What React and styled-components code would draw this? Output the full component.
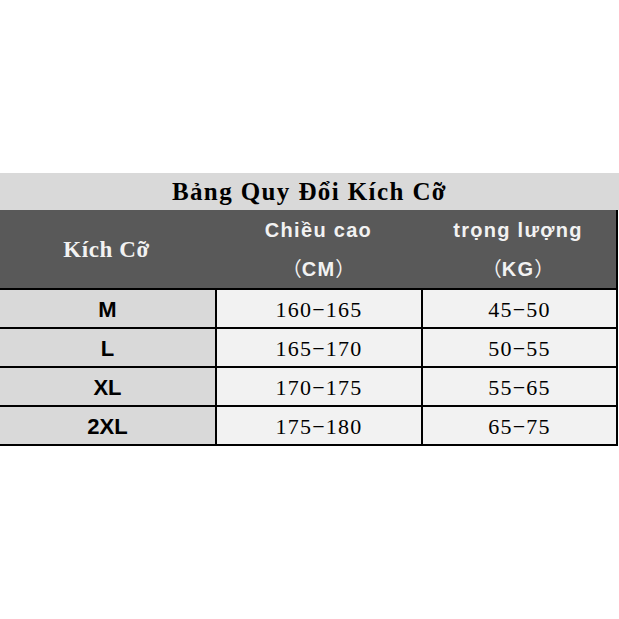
import React from "react";
import styled, { createGlobalStyle } from "styled-components";

const Global = createGlobalStyle`
  html, body { margin: 0; padding: 0; background: #ffffff; }
  body { width: 619px; height: 619px; overflow: hidden; }
`;

const Page = styled.div`
  padding-top: 173px;
  width: 619px;
`;

const Title = styled.div`
  height: 37px;
  background: #d9d9d9;
  display: flex;
  align-items: center;
  justify-content: center;
  font-family: "Liberation Serif", serif;
  font-weight: bold;
  font-size: 25px;
  letter-spacing: 1.4px;
  color: #000;
  padding-top: 1px;
  box-sizing: border-box;
`;

const Header = styled.div`
  width: 618px;
  height: 78px;
  box-sizing: border-box;
  background: #595959;
  border-right: 2px solid #000;
  display: grid;
  grid-template-columns: 217px 206px 193px;
  color: #f2f2f2;
`;

const SizeHead = styled.div`
  display: flex;
  align-items: center;
  justify-content: center;
  font-family: "Liberation Serif", serif;
  font-weight: bold;
  font-size: 23px;
  letter-spacing: 0.6px;
  padding-top: 2px;
  padding-right: 4px;
`;

const ColHead = styled.div`
  display: flex;
  flex-direction: column;
  align-items: center;
  font-family: "Liberation Sans", Arial, sans-serif;
  font-weight: bold;
  font-size: 20px;
  letter-spacing: 1.3px;
  line-height: 38px;
  padding-top: 1px;
  padding-right: 3px;
`;

const Paren = styled.span`
  font-family: "Noto Sans CJK SC", sans-serif;
  font-weight: normal;
  letter-spacing: 0;
`;

const Body = styled.div`
  width: 618px;
  box-sizing: border-box;
  background: #000;
  padding: 2px 2px 2px 0;
  display: grid;
  grid-template-columns: 215px 204px 193px;
  grid-auto-rows: 37px;
  gap: 2px;
`;

const Cell = styled.div`
  background: ${(p) => (p.$size ? "#d9d9d9" : "#f2f2f2")};
  display: flex;
  align-items: center;
  justify-content: center;
  color: #000;
  padding-top: 3px;
  box-sizing: border-box;
  font-family: ${(p) =>
    p.$size ? '"Liberation Sans", Arial, sans-serif' : '"Liberation Serif", serif'};
  font-weight: ${(p) => (p.$size ? "bold" : "normal")};
  font-size: 22px;
  letter-spacing: ${(p) => (p.$size ? "0" : "1.2px")};
`;

const rows = [
  ["M", "160−165", "45−50"],
  ["L", "165−170", "50−55"],
  ["XL", "170−175", "55−65"],
  ["2XL", "175−180", "65−75"],
];

export default function App() {
  return (
    <>
      <Global />
      <Page>
        <Title>Bảng Quy Đổi Kích Cỡ</Title>
        <Header>
          <SizeHead>Kích Cỡ</SizeHead>
          <ColHead>
            <span>Chiều cao</span>
            <span>
              <Paren>（</Paren>CM<Paren>）</Paren>
            </span>
          </ColHead>
          <ColHead>
            <span>trọng lượng</span>
            <span>
              <Paren>（</Paren>KG<Paren>）</Paren>
            </span>
          </ColHead>
        </Header>
        <Body>
          {rows.map((r) => (
            <React.Fragment key={r[0]}>
              <Cell $size>{r[0]}</Cell>
              <Cell>{r[1]}</Cell>
              <Cell>{r[2]}</Cell>
            </React.Fragment>
          ))}
        </Body>
      </Page>
    </>
  );
}
